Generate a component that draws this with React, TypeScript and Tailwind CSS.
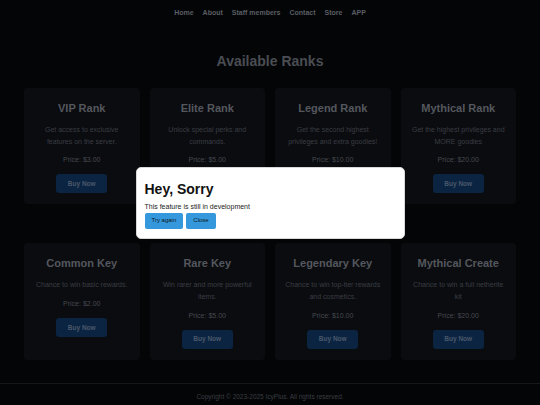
const navLinks = ["Home", "About", "Staff members", "Contact", "Store", "APP"];

type Item = { name: string; desc: string; price: string };

const items: Item[] = [
  { name: "VIP Rank", desc: "Get access to exclusive features on the server.", price: "$3.00" },
  { name: "Elite Rank", desc: "Unlock special perks and commands.", price: "$5.00" },
  { name: "Legend Rank", desc: "Get the second highest privileges and extra goodies!", price: "$10.00" },
  { name: "Mythical Rank", desc: "Get the highest privileges and MORE goodies", price: "$20.00" },
  { name: "Common Key", desc: "Chance to win basic rewards.", price: "$2.00" },
  { name: "Rare Key", desc: "Win rarer and more powerful items.", price: "$5.00" },
  { name: "Legendary Key", desc: "Chance to win top-tier rewards and cosmetics.", price: "$10.00" },
  { name: "Mythical Create", desc: "Chance to win a full netherite kit", price: "$20.00" },
];

const Card = ({ item }: { item: Item }) => (
  <div className="flex flex-col items-center rounded-[4px] bg-[#0b0c10] px-[9px] pt-3 pb-[11px] text-center">
    <h3 className="text-[11px] font-bold leading-[16px] text-[#54575d]">{item.name}</h3>
    <p className="mt-2 text-[7px] leading-[11.7px] text-[#3a3d43]">{item.desc}</p>
    <p className="mt-[7px] text-[7px] leading-[11px] text-[#45484e]">Price: {item.price}</p>
    <button className="mt-[9px] flex h-[19px] w-[51px] items-center justify-center rounded-[3px] bg-[#0a2442] text-[6.5px] font-bold text-[#4b586a]">
      Buy Now
    </button>
  </div>
);

export default function App() {
  return (
    <div
      className="min-h-screen bg-[#040507]"
      style={{ fontFamily: '"Liberation Sans", Arial, sans-serif' }}
    >
      <nav className="flex h-[26px] items-center justify-center gap-[9px]">
        {navLinks.map((l) => (
          <a key={l} href="#" className="text-[7px] font-bold text-[#5a5d63]">
            {l}
          </a>
        ))}
      </nav>

      <h1 className="mt-[27px] text-center text-[14px] font-bold leading-[16px] text-[#4a4d53]">
        Available Ranks
      </h1>

      <div className="mt-[19px] grid grid-cols-4 gap-x-[10px] gap-y-[39px] px-6">
        {items.map((it) => (
          <Card key={it.name} item={it} />
        ))}
      </div>

      <footer className="mt-[23px] border-t border-[#15171b] pt-[8px] pb-[8px] text-center text-[6.5px] leading-[9px] text-[#3a3d42]">
        Copyright © 2023-2025 IcyPlus. All rights reserved.
      </footer>

      {/* modal */}
      <div className="fixed inset-0 flex items-center justify-center">
        <div className="w-[269px] rounded-[5px] border border-[#d8d8d8] bg-white px-2 pt-[13px] pb-[9px]">
          <h2 className="text-[14px] font-bold leading-[16px] text-[#111]">Hey, Sorry</h2>
          <p className="mt-[5px] text-[7px] leading-[9px] text-[#222]">This feature is still in development</p>
          <div className="mt-[2px] flex gap-[3px]">
            <button className="h-[16px] rounded-[2px] bg-[#3598dc] px-[7px] text-[6px] text-[#0d1620]">
              Try again
            </button>
            <button className="h-[16px] rounded-[2px] bg-[#3598dc] px-[7px] text-[6px] text-[#0d1620]">
              Close
            </button>
          </div>
        </div>
      </div>
    </div>
  );
}
